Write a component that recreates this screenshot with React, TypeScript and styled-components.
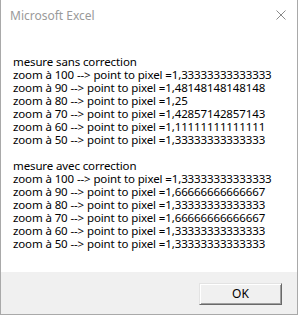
import React from 'react'
import styled, { createGlobalStyle } from 'styled-components'

const GlobalStyle = createGlobalStyle`
  html, body {
    margin: 0;
    padding: 0;
    background: #ffffff;
  }
`

const Window = styled.div`
  box-sizing: border-box;
  width: 298px;
  height: 315px;
  display: flex;
  flex-direction: column;
  background: #ffffff;
  border: 1px solid #a9a9a9;
  border-top: none;
  font-family: "Noto Sans", "Segoe UI", sans-serif;
`

const TitleBar = styled.div`
  height: 30px;
  display: flex;
  align-items: center;
  justify-content: space-between;
  padding: 0 10px 0 9px;
`

const Title = styled.span`
  font-size: 12px;
  color: #9a9a9a;
`

const CloseButton = styled.svg`
  width: 10px;
  height: 10px;
  margin-right: 1px;
`

const Body = styled.div`
  flex: 1;
  padding: 25px 0 0 12px;
`

const Line = styled.div`
  font-size: 11.5px;
  line-height: 13px;
  height: 13px;
  letter-spacing: -0.12px;
  color: #000000;
  white-space: pre;
`

const Footer = styled.div`
  height: 42px;
  background: #f0f0f0;
  display: flex;
  align-items: center;
  justify-content: flex-end;
  padding-right: 15px;
`

const OkButton = styled.button`
  box-sizing: border-box;
  width: 83px;
  height: 22px;
  margin-top: 1px;
  background: #f0f0f0;
  border: 1px solid;
  border-color: #e3e3e3 #696969 #696969 #e3e3e3;
  box-shadow: inset 1px 1px #ffffff, inset -1px -1px #a0a0a0;
  font-family: "Noto Sans", "Segoe UI", sans-serif;
  font-size: 12px;
  color: #000000;
  padding: 0;
`

const lines = [
  'mesure sans correction',
  'zoom à 100 --> point to pixel =1,33333333333333',
  'zoom à 90 --> point to pixel =1,48148148148148',
  'zoom à 80 --> point to pixel =1,25',
  'zoom à 70 --> point to pixel =1,42857142857143',
  'zoom à 60 --> point to pixel =1,11111111111111',
  'zoom à 50 --> point to pixel =1,33333333333333',
  '',
  'mesure avec correction',
  'zoom à 100 --> point to pixel =1,33333333333333',
  'zoom à 90 --> point to pixel =1,66666666666667',
  'zoom à 80 --> point to pixel =1,33333333333333',
  'zoom à 70 --> point to pixel =1,66666666666667',
  'zoom à 60 --> point to pixel =1,33333333333333',
  'zoom à 50 --> point to pixel =1,33333333333333',
]

const App = () => {
  return (
    <>
      <GlobalStyle />
      <Window>
        <TitleBar>
          <Title>Microsoft Excel</Title>
          <CloseButton viewBox="0 0 10 10">
            <path d="M0.5 0.5 L9.5 9.5 M9.5 0.5 L0.5 9.5" stroke="#8a8a8a" strokeWidth="1" fill="none" />
          </CloseButton>
        </TitleBar>
        <Body>
          {lines.map((text, i) => (
            <Line key={i}>{text}</Line>
          ))}
        </Body>
        <Footer>
          <OkButton>OK</OkButton>
        </Footer>
      </Window>
    </>
  )
}

export default App
